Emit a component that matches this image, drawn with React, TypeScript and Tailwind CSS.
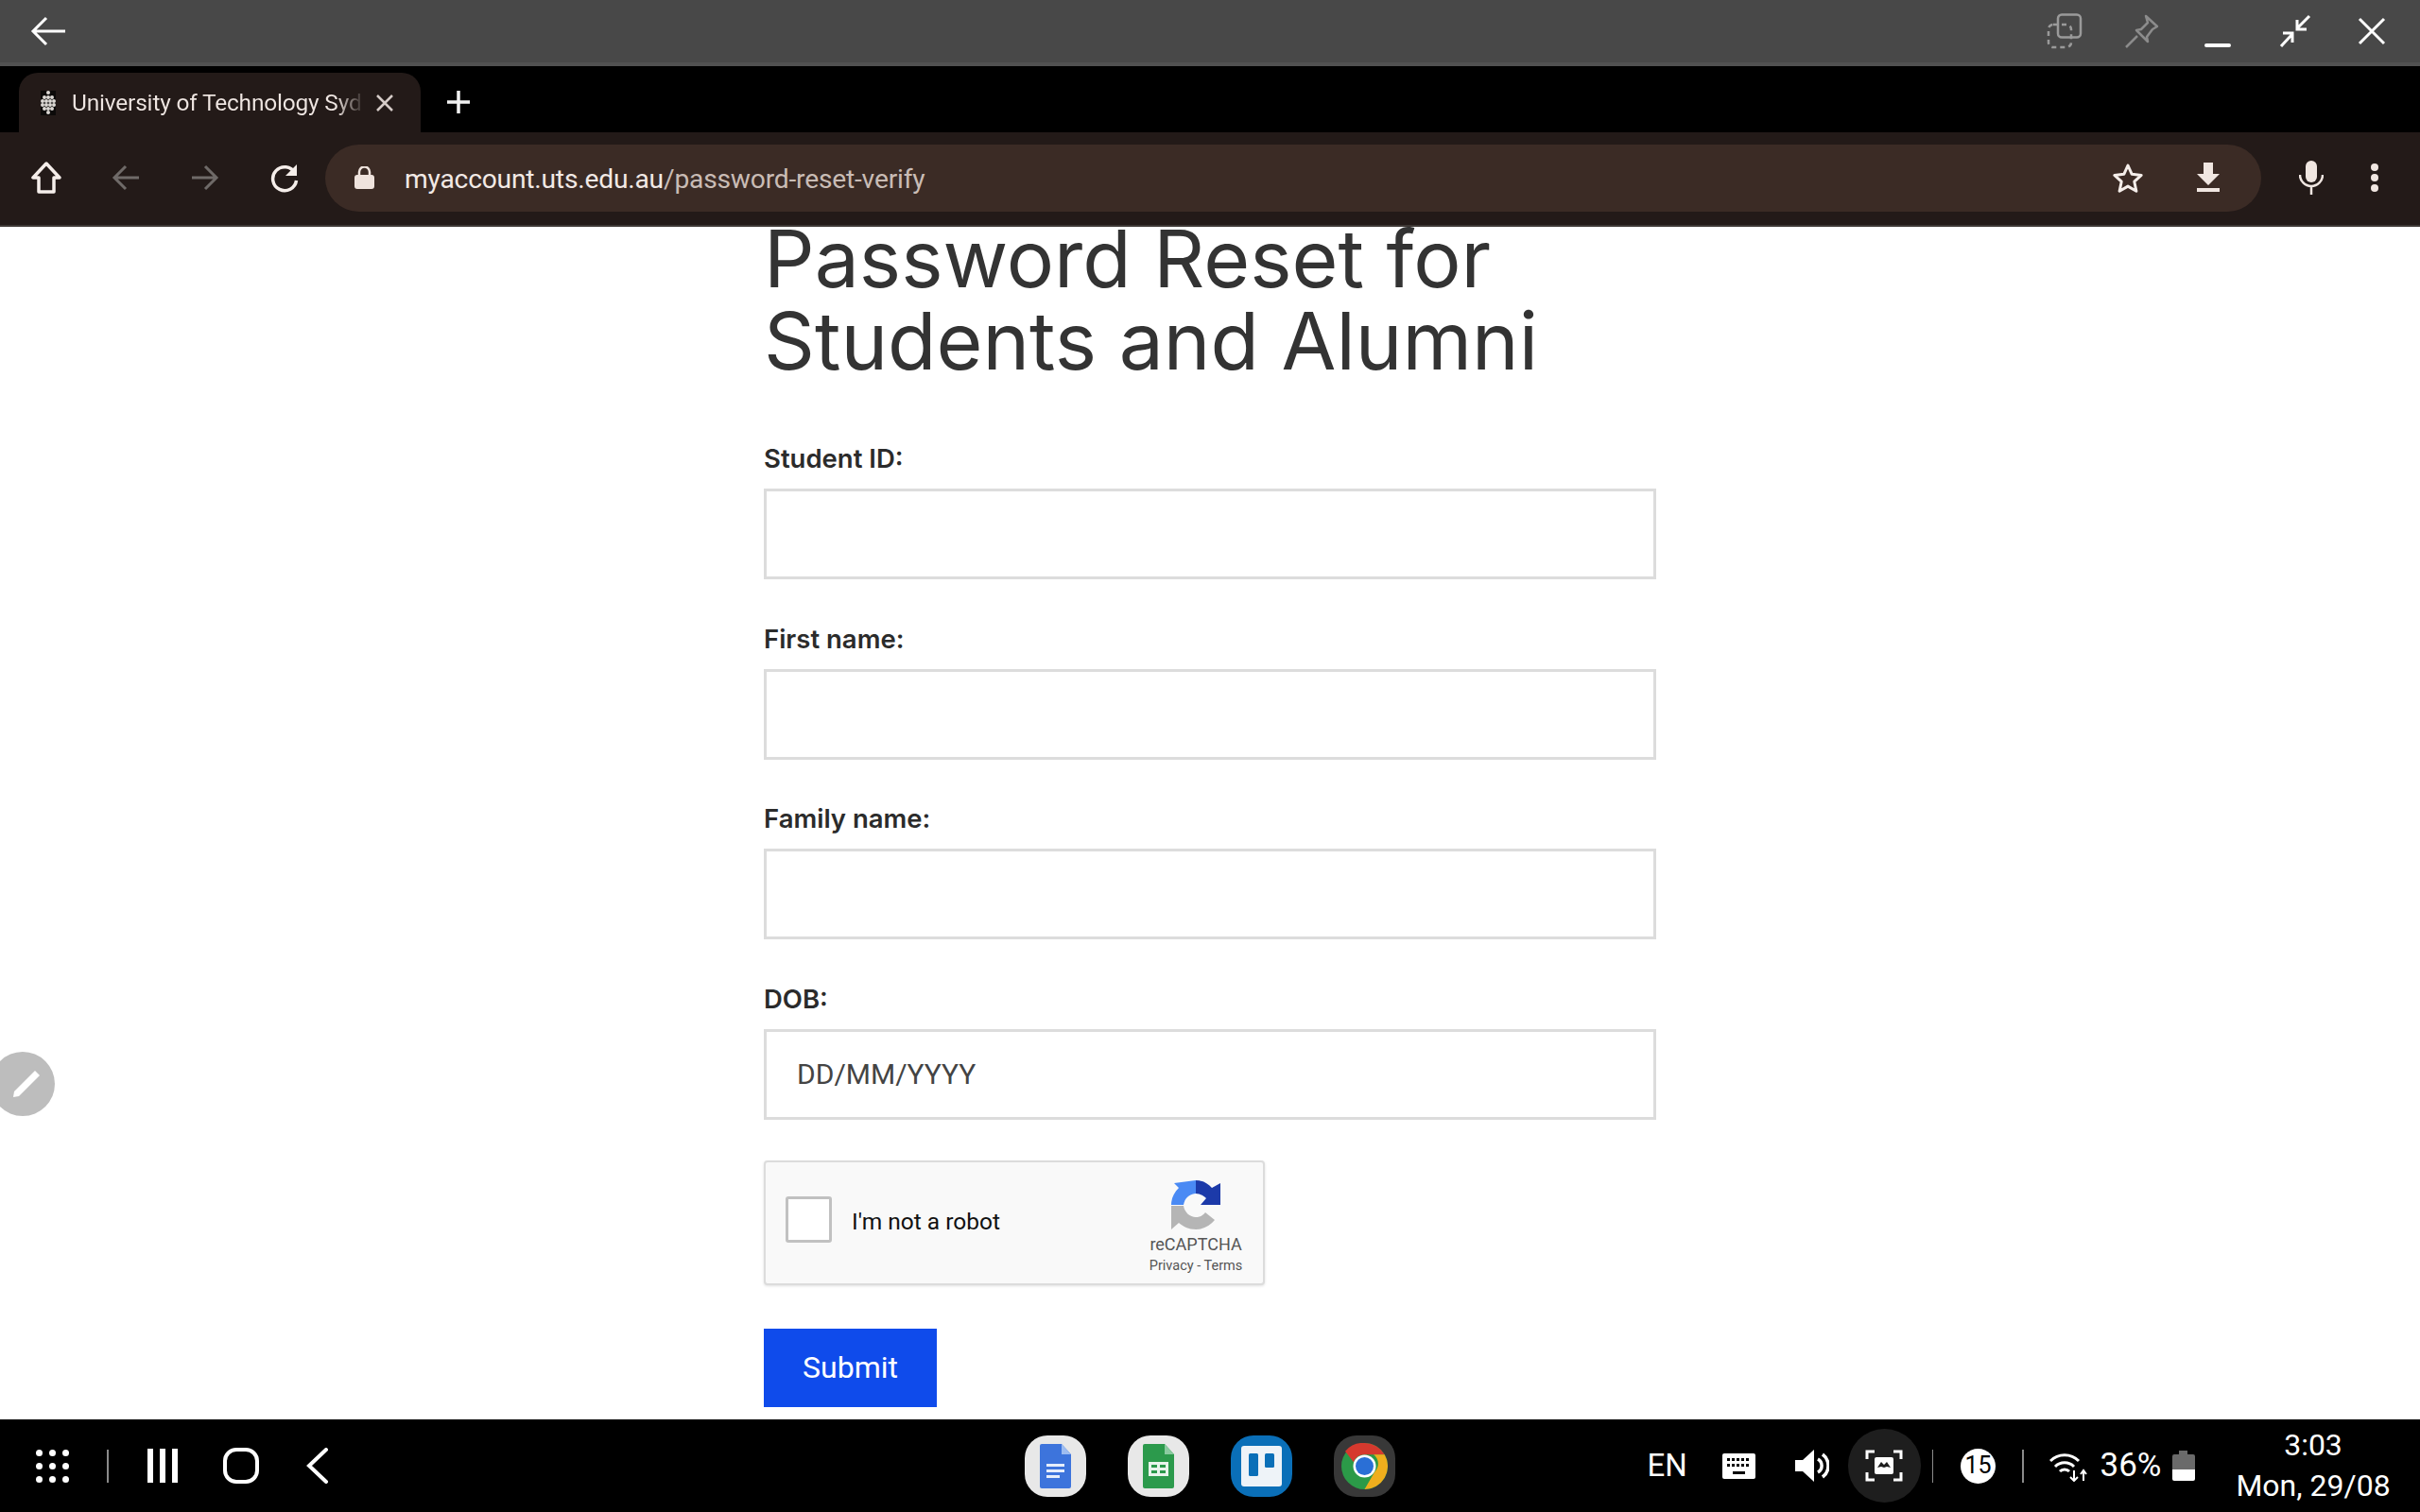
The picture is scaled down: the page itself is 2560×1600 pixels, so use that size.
const fields = ['Student ID:', 'First name:', 'Family name:', 'DOB:']

function TopBar() {
    return (
        <div className="h-[70px] shrink-0 bg-[#484848] border-b-[4px] border-[#515151] flex items-center pl-[32px] pr-[36px] text-white">
            <svg width="38" height="32" viewBox="0 0 38 32" fill="none" stroke="white" strokeWidth="3">
                <path d="M37 16H3M17 2 3 16l14 14" />
            </svg>
            <div className="flex-1" />
            {/* dual window */}
            <svg width="38" height="38" viewBox="0 0 38 38" fill="none" stroke="#9a9a9a" strokeWidth="2.5" className="mr-[45px]">
                <rect x="12" y="1.5" width="24" height="24" rx="4" />
                <rect x="2" y="12" width="24" height="24" rx="5" strokeDasharray="5 4" />
            </svg>
            {/* pin */}
            <svg width="36" height="36" viewBox="0 0 36 36" fill="none" stroke="#8c8c8c" strokeWidth="2.5" className="mr-[48px]">
                <path d="M22 2 34 13l-5 3-6 8 1 5-12-12 5-1 7-7z" strokeLinejoin="round" />
                <path d="M13 23 1 35" />
            </svg>
            <div className="w-[28px] h-[4px] bg-white rounded-[2px] mt-[30px] mr-[51px]" />
            <svg width="34" height="36" viewBox="0 0 34 36" fill="none" stroke="white" strokeWidth="3" className="mr-[49px]">
                <path d="M32 2 19 15M19 6v10h10M2 34l12-13M14 30V20H4" />
            </svg>
            <svg width="30" height="30" viewBox="0 0 30 30" fill="none" stroke="white" strokeWidth="3">
                <path d="M2 2l26 26M28 2 2 28" />
            </svg>
        </div>
    )
}

function UtsFavicon() {
    const dots = [
        [8, 2], [4, 7], [8, 7], [12, 7], [2, 11], [6, 11], [10, 11], [14, 11],
        [2, 15], [6, 15], [10, 15], [14, 15], [4, 19], [8, 19], [12, 19], [8, 23],
    ]
    return (
        <svg width="16" height="26" viewBox="0 0 16 26" fill="#dcd8d4" className="shrink-0 bg-[#0c0a09]">
            {dots.map(([cx, cy], i) => (
                <circle key={i} cx={cx} cy={cy} r="2" />
            ))}
        </svg>
    )
}

function TabStrip() {
    return (
        <div className="h-[70px] shrink-0 bg-black flex items-end pl-[20px]">
            <div className="w-[425px] h-[63px] bg-[#231a18] rounded-t-[20px] flex items-center pl-[23px] text-[#efe6e2]">
                <UtsFavicon />
                <span className="ml-[17px] mt-[2px] w-[310px] text-[24.5px] tracking-[-0.2px] whitespace-nowrap bg-gradient-to-r from-[#efe6e2] from-[90%] to-transparent bg-clip-text text-transparent">
                    University of Technology Syd
                </span>
                <svg width="20" height="20" viewBox="0 0 20 20" fill="none" stroke="#d6ccc8" strokeWidth="2.5" className="ml-[11px] shrink-0">
                    <path d="M2 2l16 16M18 2 2 18" />
                </svg>
            </div>
            <svg width="26" height="26" viewBox="0 0 26 26" fill="none" stroke="#f2f2f2" strokeWidth="3.5" className="ml-[27px] mb-[19px]">
                <path d="M13 1v24M1 13h24" />
            </svg>
        </div>
    )
}

function Toolbar() {
    return (
        <div className="h-[100px] shrink-0 bg-[#231a18] border-b-[2px] border-[#3d3734] flex items-center pl-[33px] pb-[2px] text-[#f2e9e5]">
            <svg width="32" height="34" viewBox="0 0 32 34" fill="none" stroke="#f5eeea" strokeWidth="3.5" strokeLinejoin="round">
                <path d="M16 2 2 17h6v15h16V17h6z" />
            </svg>
            <svg width="30" height="30" viewBox="0 0 30 30" fill="none" stroke="#6f6a68" strokeWidth="3" className="ml-[53px]">
                <path d="M29 15H4M15 3 3 15l12 12" />
            </svg>
            <svg width="30" height="30" viewBox="0 0 30 30" fill="none" stroke="#6f6a68" strokeWidth="3" className="ml-[54px]">
                <path d="M1 15h25M15 3l12 12-12 12" />
            </svg>
            <svg width="30" height="32" viewBox="0 0 30 32" fill="none" stroke="#f5eeea" strokeWidth="3.5" className="ml-[54px]">
                <path d="M26 11a12.5 12.5 0 1 0 1.5 8" />
                <path d="M28 2v12H16z" fill="#f5eeea" stroke="none" />
            </svg>
            <div className="ml-[28px] w-[2048px] h-[71px] bg-[#3b2b25] rounded-full flex items-center pl-[31px] pr-[43px]">
                <svg width="21" height="24" viewBox="0 0 21 24" fill="#efe3dd">
                    <rect x="0" y="9" width="21" height="15" rx="3" />
                    <path d="M5 10V6a5.5 5.5 0 0 1 11 0v4" fill="none" stroke="#efe3dd" strokeWidth="2.5" />
                </svg>
                <span className="ml-[32px] mt-[4px] text-[28.2px] tracking-[-0.2px] whitespace-nowrap text-[#f2e9e5]">
                    myaccount.uts.edu.au<span className="text-[#c9bcb5]">/password-reset-verify</span>
                </span>
                <div className="flex-1" />
                <svg width="34" height="33" viewBox="0 0 34 33" fill="none" stroke="#f5eeea" strokeWidth="3" strokeLinejoin="round">
                    <path d="M17 3l4.2 9.3 10 1.1-7.4 6.8 2.1 10L17 25.1 8.1 30.2l2.1-10-7.4-6.8 10-1.1z" />
                </svg>
                <svg width="26" height="32" viewBox="0 0 26 32" fill="#f0e6e1" className="ml-[55px]">
                    <path d="M8 0h10v12h7L13 24 1 12h7zM1 27h24v4H1z" />
                </svg>
            </div>
            <svg width="26" height="36" viewBox="0 0 26 36" fill="none" className="ml-[40px]">
                <rect x="7" y="0" width="12" height="23" rx="6" fill="#f0e6e1" />
                <path d="M1 15a12 12 0 0 0 24 0M13 27v9" stroke="#f0e6e1" strokeWidth="2.5" />
            </svg>
            <div className="ml-[50px] flex flex-col gap-[3px]">
                <div className="w-[8px] h-[8px] rounded-full bg-[#f0e6e1]" />
                <div className="w-[8px] h-[8px] rounded-full bg-[#f0e6e1]" />
                <div className="w-[8px] h-[8px] rounded-full bg-[#f0e6e1]" />
            </div>
        </div>
    )
}

function RecaptchaLogo() {
    return (
        <svg width="52" height="52" viewBox="0 0 52 52">
            <path d="M26 0V14C20 14 14 19 13 26H0C0 19 3 13 8 8L3 3Z" fill="#4a8af4" />
            <path d="M26 0C33 0 38 3 43 8L52 3V26H31L37 19C34 16 30 14 26 14Z" fill="#1c3aa9" />
            <path d="M0 27H13C14 34 20 39 26 39C30 39 34 37 36 34L46 42C41 48 34 52 26 52C18 52 13 49 8 45L0 52Z" fill="#b5b5b5" />
        </svg>
    )
}

function Recaptcha() {
    return (
        <div className="w-[530px] h-[132px] bg-[#f9f9f9] border-2 border-[#dcdcdc] rounded-[4px] shadow-[0_1px_3px_rgba(0,0,0,0.12)] flex items-center pl-[21px] pr-[21px] mt-[43px]">
            <div className="w-[49px] h-[49px] bg-white border-[3px] border-[#c1c1c1] rounded-[3px] mb-[6px]" />
            <span className="ml-[21px] text-[24.5px] text-[#111]">I'm not a robot</span>
            <div className="flex-1" />
            <div className="flex flex-col items-center text-[#555] w-[100px] pt-[10px]">
                <RecaptchaLogo />
                <span className="text-[18px] leading-[22px] mt-[5px]">reCAPTCHA</span>
                <span className="text-[14.5px] leading-[18px] mt-[3px] whitespace-nowrap">Privacy - Terms</span>
            </div>
        </div>
    )
}

function PasswordForm() {
    return (
        <div className="flex-1 bg-white">
            <div className="w-[944px] mx-auto">
                <h1 className="font-['Inter',sans-serif] text-[84px] leading-[87px] font-normal text-[#333] -mt-[10px]">
                    Password Reset for
                    <br />
                    Students and Alumni
                </h1>
                <div className="mt-[65px] flex flex-col gap-[46.5px]">
                    {fields.map((label) => (
                        <div key={label}>
                            <label className="block font-['Inter',sans-serif] font-semibold text-[27.5px] leading-[32px] text-[#2b2b2b] mb-[16px]">
                                {label}
                            </label>
                            <input
                                readOnly
                                placeholder={label === 'DOB:' ? 'DD/MM/YYYY' : ''}
                                className="block w-full h-[96px] border-[3px] border-[#dcdcdc] bg-white px-[32px] text-[30px] placeholder:text-[#444] outline-none"
                            />
                        </div>
                    ))}
                </div>
                <Recaptcha />
                <button className="mt-[46px] block w-[183px] h-[83px] bg-[#0f4beb] text-white text-[32px]">Submit</button>
            </div>
        </div>
    )
}

function AppIcon({ bg, children }: { bg: string; children: React.ReactNode }) {
    return <div className={`w-[65px] h-[65px] rounded-[24px] flex items-center justify-center ${bg}`}>{children}</div>
}

function Taskbar() {
    return (
        <div className="h-[98px] shrink-0 bg-black text-white flex items-center pl-[38px]">
            <div className="grid grid-cols-3 gap-[7px]">
                {Array.from({ length: 9 }).map((_, i) => (
                    <div key={i} className="w-[7px] h-[7px] rounded-full bg-white" />
                ))}
            </div>
            <div className="ml-[40px] w-[1.5px] h-[35px] bg-[#8a8a8a]" />
            <div className="ml-[41px] flex gap-[7px]">
                <div className="w-[6px] h-[36px] bg-white" />
                <div className="w-[6px] h-[36px] bg-white" />
                <div className="w-[6px] h-[36px] bg-white" />
            </div>
            <div className="ml-[48px] w-[38px] h-[38px] rounded-[14px] border-[4px] border-white" />
            <svg width="24" height="38" viewBox="0 0 24 38" fill="none" stroke="white" strokeWidth="4" strokeLinecap="round" className="ml-[50px]">
                <path d="M21 2 3 19l18 17" />
            </svg>

            {/* pinned apps */}
            <div className="ml-[736px] flex gap-[44px]">
                <AppIcon bg="bg-[#e8e8e8]">
                    <svg width="33" height="47" viewBox="0 0 33 47">
                        <path d="M2 0h21l10 11v34a2 2 0 0 1-2 2H2a2 2 0 0 1-2-2V2a2 2 0 0 1 2-2z" fill="#3d74dc" />
                        <path d="M23 0l10 11H23z" fill="#9dbcf0" />
                        <path d="M7 21h19v3H7zM7 27h19v3H7zM7 33h14v3H7z" fill="#e6eefb" />
                    </svg>
                </AppIcon>
                <AppIcon bg="bg-[#e8e8e8]">
                    <svg width="33" height="47" viewBox="0 0 33 47">
                        <path d="M2 0h21l10 11v34a2 2 0 0 1-2 2H2a2 2 0 0 1-2-2V2a2 2 0 0 1 2-2z" fill="#2c9a4c" />
                        <path d="M23 0l10 11H23z" fill="#8bcba0" />
                        <path d="M6 19h21v15H6z" fill="#e8f4ec" />
                        <path d="M9 22h6v3H9zM18 22h6v3h-6zM9 28h6v3H9zM18 28h6v3h-6z" fill="#2c9a4c" />
                    </svg>
                </AppIcon>
                <AppIcon bg="bg-[#0a6fb8]">
                    <svg width="43" height="43" viewBox="0 0 43 43">
                        <rect width="43" height="43" rx="3" fill="#eef3f8" />
                        <rect x="8" y="8" width="10" height="24" rx="1.5" fill="#0a6fb8" />
                        <rect x="25" y="8" width="10" height="15" rx="1.5" fill="#0a6fb8" />
                    </svg>
                </AppIcon>
                <AppIcon bg="bg-[#383838]">
                    <svg width="49" height="49" viewBox="0 0 49 49">
                        <circle cx="24.5" cy="24.5" r="24.5" fill="#2b9a48" />
                        <path d="M24.5 0a24.5 24.5 0 0 1 21.2 12.2H24.5a12.3 12.3 0 0 0-11.6 8L4 8.7A24.5 24.5 0 0 1 24.5 0z" fill="#d6392e" />
                        <path d="M45.7 12.2A24.5 24.5 0 0 1 24.5 49l10.6-18.3a12.2 12.2 0 0 0-1-18.5z" fill="#efae1d" />
                        <circle cx="24.5" cy="24.5" r="12" fill="white" />
                        <circle cx="24.5" cy="24.5" r="9.5" fill="#2a6fd6" />
                    </svg>
                </AppIcon>
            </div>

            {/* system tray */}
            <span className="ml-[267px] text-[33px] w-[41px]">EN</span>
            <svg width="35" height="27" viewBox="0 0 35 27" className="ml-[38px]">
                <rect width="35" height="27" rx="2" fill="white" />
                <path d="M5 6.5h25M5 12.5h25" stroke="black" strokeWidth="3" strokeDasharray="3 2" />
                <path d="M11 19h13v3H11z" fill="black" />
            </svg>
            <svg width="36" height="34" viewBox="0 0 36 34" fill="none" className="ml-[42px]">
                <path d="M0 11h8L20 0v34L8 23H0z" fill="white" />
                <path d="M24 10a8 8 0 0 1 0 14M29 5a15 15 0 0 1 0 24" stroke="white" strokeWidth="3.5" />
            </svg>
            <div className="ml-[20px] w-[77px] h-[78px] rounded-full bg-[#1e1e1e] flex items-center justify-center">
                <svg width="40" height="34" viewBox="0 0 40 34" fill="none">
                    <path d="M2 10V2h8M30 2h8v8M38 24v8h-8M10 32H2v-8" stroke="white" strokeWidth="3" />
                    <rect x="10" y="8" width="20" height="18" rx="2" fill="white" />
                    <path d="M13 19l4-6 3 3 3-3 4 6-4-1-3 1-3-1z" fill="#1e1e1e" />
                </svg>
            </div>
            <div className="ml-[12px] w-[1.5px] h-[35px] bg-[#8a8a8a]" />
            <div className="ml-[29px] w-[37px] h-[37px] rounded-full bg-white text-black text-[25px] flex items-center justify-center">
                15
            </div>
            <div className="ml-[28px] w-[1.5px] h-[35px] bg-[#8a8a8a]" />
            <svg width="41" height="34" viewBox="0 0 41 34" fill="none" stroke="white" strokeWidth="3" className="ml-[27px]">
                <path d="M1 12a21 21 0 0 1 30 0M6 18a14 14 0 0 1 20 0M11 23a7 7 0 0 1 10 0" />
                <path d="M26 22v11M22 29l4 4 4-4M36 33V22M33 26l3-4 3 4" strokeWidth="2" />
            </svg>
            <span className="ml-[13px] text-[35px] w-[66px] whitespace-nowrap">36%</span>
            <div className="ml-[10px] flex flex-col items-center">
                <div className="w-[9px] h-[4px] bg-[#6a6a6a]" />
                <div className="w-[24px] h-[16px] bg-[#6a6a6a] rounded-t-[2px]" />
                <div className="w-[24px] h-[12px] bg-white rounded-b-[2px]" />
            </div>
            <div className="ml-[45px] w-[161px] flex flex-col items-center text-[32px] leading-[43px] whitespace-nowrap">
                <span>3:03</span>
                <span>Mon, 29/08</span>
            </div>
        </div>
    )
}

export default function App() {
    return (
        <div className="relative w-[2560px] h-[1600px] overflow-hidden flex flex-col bg-white font-['Roboto',sans-serif]">
            <TopBar />
            <TabStrip />
            <Toolbar />
            <PasswordForm />
            <Taskbar />

            {/* floating pen button */}
            <div className="absolute left-[-10px] top-[1113px] w-[68px] h-[68px] rounded-full bg-[#bdbdbd] flex items-center justify-center">
                <svg width="34" height="34" viewBox="0 0 34 34" fill="white" className="ml-[8px]">
                    <path d="M26 3l5 5L9 30l-6 1 1-6z" />
                </svg>
            </div>
        </div>
    )
}
